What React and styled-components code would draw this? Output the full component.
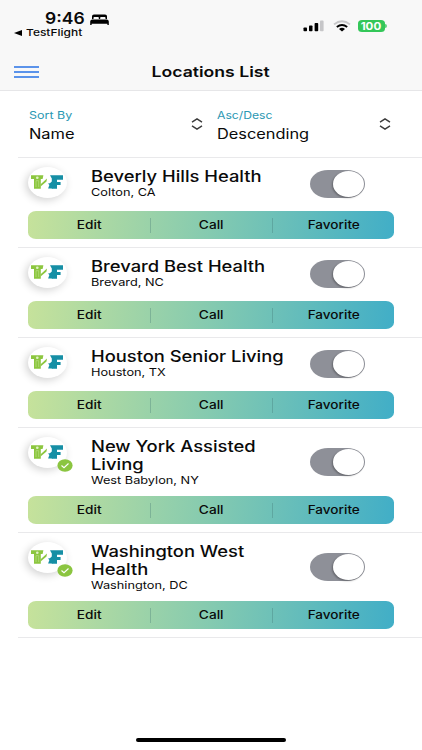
import React from "react";
import styled, { createGlobalStyle } from "styled-components";

const GlobalStyle = createGlobalStyle`
  * { box-sizing: border-box; }
  body { margin: 0; background: #fff; }
  button { font: inherit; color: inherit; background: none; border: 0; padding: 0; }
`;

const Screen = styled.div`
  width: 422px;
  height: 750px;
  display: flex;
  flex-direction: column;
  overflow: hidden;
  background: #fff;
  color: #0a0a0a;
  font-family: Inter, "Liberation Sans", sans-serif;
`;

/* Extended-width lettering used across the app. */
const Wide = styled.span`
  display: inline-block;
  white-space: nowrap;
  transform: scaleX(${(p) => p.$k || 1.25});
  transform-origin: ${(p) => (p.$center ? "center" : "left")};
`;

const Header = styled.header`
  height: 91px;
  flex: none;
  background: #f8f8f8;
  border-bottom: 1px solid #e6e6e8;
`;

const StatusBar = styled.div`
  height: 53px;
  display: flex;
  justify-content: space-between;
`;

const StatusLeft = styled.div`
  padding: 10px 0 0 14px;
`;

const ClockRow = styled.div`
  display: flex;
  height: 18px;
  padding-left: 31px;
  font-size: 15.5px;
  line-height: 18px;
  font-weight: 600;
`;

const Clock = styled.div`
  width: 45px;
  flex: none;
`;

const BedIcon = styled.svg`
  width: 19px;
  height: 12px;
  margin-top: 4px;
`;

const BackLink = styled.div`
  display: flex;
  align-items: center;
  height: 10px;
  gap: 4px;
  font-size: 9.5px;
  font-weight: 500;
  line-height: 10px;
`;

const StatusRight = styled.div`
  display: flex;
  align-items: flex-start;
  padding: 20px 36px 0 0;
`;

const SignalIcon = styled.svg`
  width: 21px;
  height: 12px;
  margin-right: 9px;
`;

const WifiIcon = styled.svg`
  width: 18px;
  height: 12px;
  margin-right: 7px;
`;

const Battery = styled.div`
  width: 27px;
  height: 12px;
  border-radius: 4px / 3.5px;
  background: #34c759;
  color: #fff;
  font-size: 10px;
  font-weight: 700;
  line-height: 12px;
  text-align: center;
`;

const BatteryTip = styled.div`
  width: 2px;
  height: 4px;
  margin: 4px -1px 0 0.5px;
  border-radius: 0 2px 2px 0;
  background: #63d27f;
`;

const NavBar = styled.div`
  height: 38px;
  display: grid;
  grid-template-columns: 39px 1fr 39px;
  align-items: center;
`;

const MenuButton = styled.button`
  display: flex;
  flex-direction: column;
  gap: 3px;
  margin-left: 14px;
  width: 25px;
`;

const MenuLine = styled.span`
  height: 2px;
  background: #5b93ea;
`;

const NavTitle = styled.h1`
  margin: 0;
  text-align: center;
  font-size: 14.5px;
  line-height: 20px;
  font-weight: 600;
`;

const Body = styled.main`
  flex: 1;
  padding-left: 18px;
`;

const SortBar = styled.section`
  height: 67px;
  display: flex;
  padding: 17px 0 0 10.5px;
  border-bottom: 1px solid #e9e9eb;
`;

const SortField = styled.div`
  width: 188px;
  display: flex;
  justify-content: space-between;
  padding-right: 14px;
`;

const SortLabel = styled.div`
  height: 16px;
  font-size: 10.6px;
  line-height: 15px;
  color: #2b98b3;
`;

const SortValue = styled.div`
  font-size: 13.8px;
  line-height: 20px;
`;

const ChevronIcon = styled.svg`
  width: 12px;
  height: 12px;
  margin-top: 10px;
`;

const Row = styled.article`
  border-bottom: 1px solid #e9e9eb;
  padding: 0 28px 8px 10px;
`;

const RowTop = styled.div`
  display: flex;
  min-height: 53px;
  padding: 9px 0;
`;

const Avatar = styled.div`
  position: relative;
  width: 39px;
  height: 31px;
  margin-right: 24px;
  flex: none;
  border-radius: 50%;
  background: #fff;
  box-shadow: -2px 2px 8px rgba(0, 0, 0, 0.19);
`;

const Logo = styled.svg`
  display: block;
  width: 39px;
  height: 31px;
`;

const Badge = styled.svg`
  position: absolute;
  left: 28.5px;
  top: 22px;
  width: 16px;
  height: 13px;
`;

const Info = styled.div`
  width: 219.4px;
  height: ${(p) => (p.$lines > 1 ? 50 : 35)}px;
  padding-top: 1px;
`;

const Name = styled.div`
  height: 18px;
  font-size: 15.4px;
  line-height: 18px;
  font-weight: 500;
`;

const Place = styled.div`
  font-size: 10.8px;
  line-height: 14px;
`;

const Toggle = styled.button`
  align-self: center;
  margin-bottom: 1px;
  width: 55px;
  height: 28px;
  display: flex;
  justify-content: flex-end;
  padding: 1px;
  flex: none;
  border-radius: 18px / 14px;
  background: #8e9098;
`;

const Knob = styled.span`
  width: 31px;
  height: 26px;
  border-radius: 50%;
  background: #fff;
  box-shadow: -1px 1px 2px rgba(0, 0, 0, 0.3);
`;

const Actions = styled.div`
  display: grid;
  grid-template-columns: repeat(3, 1fr);
  align-items: center;
  height: 28px;
  border-radius: 8px / 6.5px;
  background: linear-gradient(95deg, #c6e29b 0%, #84cab0 50%, #41aec7 100%);
`;

const Action = styled.button`
  height: 15px;
  font-size: 11.3px;
  font-weight: 500;
  line-height: 14px;
  border-left: 1px solid ${(p) => (p.$first ? "transparent" : "rgba(60, 110, 110, 0.3)")};
`;

const HomeArea = styled.footer`
  height: 12px;
  display: flex;
  justify-content: center;
  flex: none;
`;

const HomeIndicator = styled.div`
  width: 150px;
  height: 4px;
  border-radius: 3px;
  background: #000;
`;

const locations = [
  { name: ["Beverly Hills Health"], place: "Colton, CA" },
  { name: ["Brevard Best Health"], place: "Brevard, NC" },
  { name: ["Houston Senior Living"], place: "Houston, TX" },
  { name: ["New York Assisted", "Living"], place: "West Babylon, NY", verified: true },
  { name: ["Washington West", "Health"], place: "Washington, DC", verified: true },
];

function Chevrons() {
  return (
    <ChevronIcon viewBox="0 0 12 12" fill="none" stroke="#3c3c3c" strokeWidth="1.4">
      <path d="M1 4.2 6 .9l5 3.3M1 7.8l5 3.3 5-3.3" />
    </ChevronIcon>
  );
}

function BrandLogo() {
  return (
    <Logo viewBox="0 0 39 31">
      <g fill="#8cc63f">
        <path d="M3 8.3h12.4l-.8 3.6h-1.8v9.8H6V11.9H3z" />
        <path d="M12.6 17.2 19 11.4l-.5 3-5.9 5.2z" />
      </g>
      <circle cx="9.3" cy="10.8" r="1.3" fill="#e2f2c9" />
      <path d="M8 20v-6.3h2.7V20" fill="none" stroke="#c3e296" strokeWidth=".6" />
      <g fill="#168fa5">
        <path d="M22 8.3h13v4.5h-6V15h3.6v3H29v3.7h-5.2V11.5z" />
        <path d="m24.5 14-2.7 2.2-1.8.4 1.4 1.5-1.3 3.4h4.5z" />
      </g>
    </Logo>
  );
}

function Location({ name, place, verified }) {
  return (
    <Row>
      <RowTop>
        <Avatar>
          <BrandLogo />
          {verified && (
            <Badge viewBox="0 0 16 13">
              <ellipse cx="8" cy="6.5" rx="7.6" ry="6.2" fill="#8bc540" />
              <path d="m4.5 6.5 2.5 2.2 4.5-4.2" fill="none" stroke="#fff" strokeWidth="1.1" />
            </Badge>
          )}
        </Avatar>
        <Info $lines={name.length}>
          {name.map((text) => (
            <Name key={text}><Wide $k={1.192}>{text}</Wide></Name>
          ))}
          <Place><Wide $k={1.18}>{place}</Wide></Place>
        </Info>
        <Toggle aria-label="Enable location"><Knob /></Toggle>
      </RowTop>
      <Actions>
        <Action $first><Wide $center $k={1.21}>Edit</Wide></Action>
        <Action><Wide $center $k={1.21}>Call</Wide></Action>
        <Action><Wide $center $k={1.2}>Favorite</Wide></Action>
      </Actions>
    </Row>
  );
}

export default function App() {
  return (
    <Screen>
      <GlobalStyle />
      <Header>
        <StatusBar>
          <StatusLeft>
            <ClockRow>
              <Clock><Wide $k={1.13}>9:46</Wide></Clock>
              <BedIcon viewBox="0 0 19 12">
                <path d="M2 5V2.3Q2 .4 4 .4h11q2 0 2 1.9V5h-1.5V3.7q0-.7-.8-.7h-3.8q-.7 0-.7.7V5H8.8V3.7q0-.7-.7-.7H4.3q-.8 0-.8.7V5zM2 5.4h15q1.8.3 1.8 2.2V11h-1.4V9.7H1.6V11H.2V7.6Q.2 5.7 2 5.4z" />
              </BedIcon>
            </ClockRow>
            <BackLink>
              <svg width="8" height="6" viewBox="0 0 8 6"><path d="M0 3 8 0v6z" /></svg>
              <Wide $k={1.26}>TestFlight</Wide>
            </BackLink>
          </StatusLeft>
          <StatusRight>
            <SignalIcon viewBox="0 0 21 12">
              <rect x=".5" y="7.5" width="3.5" height="3.8" rx=".8" />
              <rect x="6" y="5.5" width="3.5" height="5.8" rx=".8" />
              <rect x="11.6" y="3" width="3.6" height="8.3" rx=".8" />
              <rect x="17" y=".6" width="3.6" height="10.7" rx=".8" fill="#c6c6c8" />
            </SignalIcon>
            <WifiIcon viewBox="0 0 18 12" fill="none">
              <path d="M1 4.4Q9-2 17 4.4" stroke="#c6c6c8" strokeWidth="1.8" />
              <path d="M3.8 6.9q5.2-4 10.4 0" stroke="#000" strokeWidth="1.9" />
              <path d="M6 9q3-2.4 6 0l-3 2.5z" fill="#000" />
            </WifiIcon>
            <Battery><Wide $center $k={1.15}>100</Wide></Battery>
            <BatteryTip />
          </StatusRight>
        </StatusBar>
        <NavBar>
          <MenuButton aria-label="Menu"><MenuLine /><MenuLine /><MenuLine /></MenuButton>
          <NavTitle><Wide $center $k={1.215}>Locations List</Wide></NavTitle>
        </NavBar>
      </Header>
      <Body>
        <SortBar>
          <SortField>
            <div>
              <SortLabel><Wide $k={1.18}>Sort By</Wide></SortLabel>
              <SortValue><Wide $k={1.19}>Name</Wide></SortValue>
            </div>
            <Chevrons />
          </SortField>
          <SortField>
            <div>
              <SortLabel><Wide $k={1.15}>Asc/Desc</Wide></SortLabel>
              <SortValue><Wide $k={1.185}>Descending</Wide></SortValue>
            </div>
            <Chevrons />
          </SortField>
        </SortBar>
        {locations.map((location) => (
          <Location key={location.name[0]} {...location} />
        ))}
      </Body>
      <HomeArea><HomeIndicator /></HomeArea>
    </Screen>
  );
}
